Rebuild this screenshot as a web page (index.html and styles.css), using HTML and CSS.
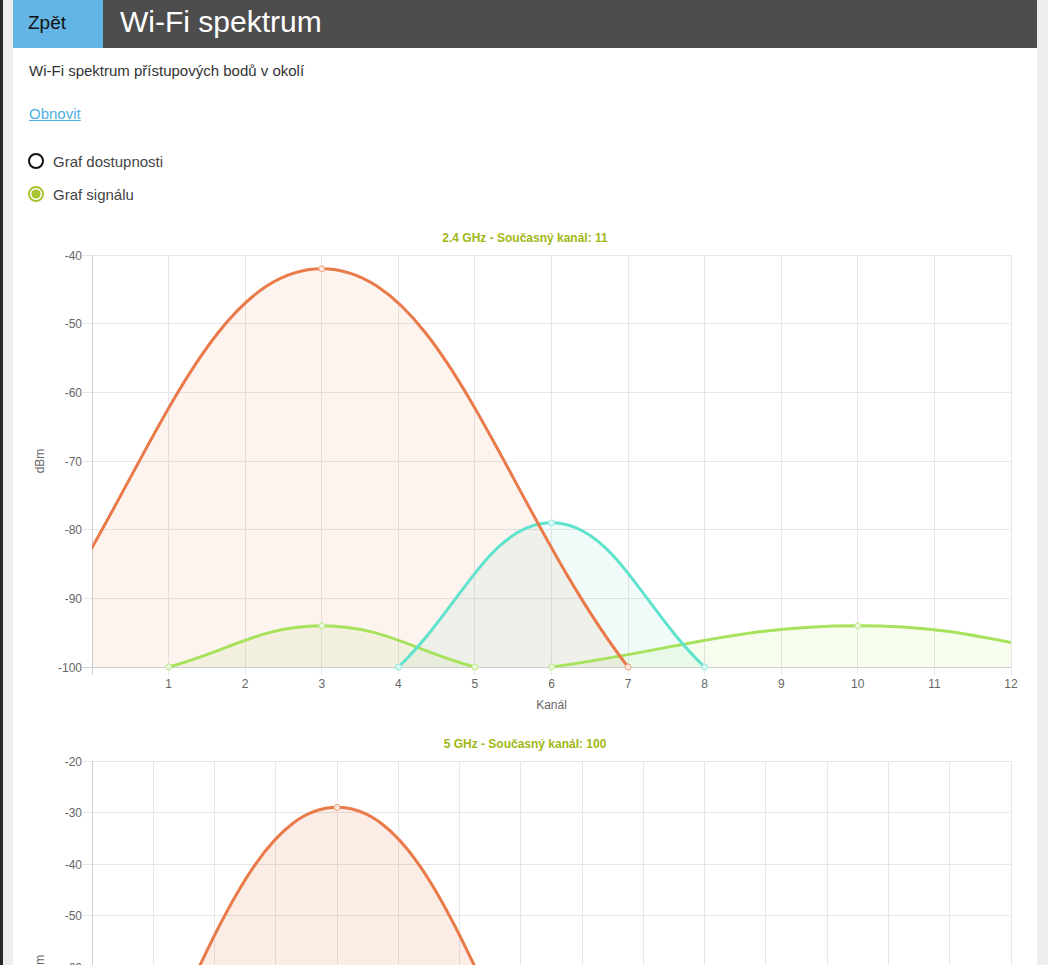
FILE: index.html
```html
<!DOCTYPE html>
<html lang="cs">
<head>
<meta charset="utf-8">
<title>Wi-Fi spektrum</title>
<link rel="stylesheet" href="styles.css">
</head>
<body>
<div class="frame">
  <div class="page">
    <header class="topbar">
      <a class="back" href="#">Zpět</a>
      <h1 class="title">Wi-Fi spektrum</h1>
    </header>
    <main class="content">
      <p class="desc">Wi-Fi spektrum přístupových bodů v okolí</p>
      <a class="refresh" href="#">Obnovit</a>
      <div class="radios">
        <label class="radio"><span class="dot"></span>Graf dostupnosti</label>
        <label class="radio checked"><span class="dot"></span>Graf signálu</label>
      </div>
    </main>
    <section class="charts">
      <svg class="chart chart1" viewBox="13 228 1024 490" width="1024" height="490" xmlns="http://www.w3.org/2000/svg">
        <defs>
          <clipPath id="area1"><rect x="92" y="250" width="919" height="417.5"/></clipPath>
        </defs>
        <text class="ctitle" x="525" y="242">2.4 GHz - Současný kanál: 11</text>
        <g class="grid">
          <line x1="83" y1="255.5" x2="1011" y2="255.5"/>
          <line x1="83" y1="323.5" x2="1011" y2="323.5"/>
          <line x1="83" y1="392.5" x2="1011" y2="392.5"/>
          <line x1="83" y1="461.5" x2="1011" y2="461.5"/>
          <line x1="83" y1="529.5" x2="1011" y2="529.5"/>
          <line x1="83" y1="598.5" x2="1011" y2="598.5"/>
          <line x1="168.5" y1="255" x2="168.5" y2="675"/>
          <line x1="245.5" y1="255" x2="245.5" y2="675"/>
          <line x1="321.5" y1="255" x2="321.5" y2="675"/>
          <line x1="398.5" y1="255" x2="398.5" y2="675"/>
          <line x1="474.5" y1="255" x2="474.5" y2="675"/>
          <line x1="551.5" y1="255" x2="551.5" y2="675"/>
          <line x1="628.5" y1="255" x2="628.5" y2="675"/>
          <line x1="704.5" y1="255" x2="704.5" y2="675"/>
          <line x1="781.5" y1="255" x2="781.5" y2="675"/>
          <line x1="857.5" y1="255" x2="857.5" y2="675"/>
          <line x1="934.5" y1="255" x2="934.5" y2="675"/>
          <line x1="1011.5" y1="255" x2="1011.5" y2="675"/>
        </g>
        <g class="axis">
          <line x1="92.5" y1="255" x2="92.5" y2="675"/>
          <line x1="83" y1="667.5" x2="1011" y2="667.5"/>
        </g>
        <g class="ylabels">
          <text x="82" y="259.5">-40</text>
          <text x="82" y="328">-50</text>
          <text x="82" y="396.5">-60</text>
          <text x="82" y="465.5">-70</text>
          <text x="82" y="534">-80</text>
          <text x="82" y="602.5">-90</text>
          <text x="82" y="671.5">-100</text>
        </g>
        <g class="xlabels">
          <text x="168.6" y="688">1</text>
          <text x="245.2" y="688">2</text>
          <text x="321.8" y="688">3</text>
          <text x="398.3" y="688">4</text>
          <text x="474.9" y="688">5</text>
          <text x="551.5" y="688">6</text>
          <text x="628.1" y="688">7</text>
          <text x="704.7" y="688">8</text>
          <text x="781.3" y="688">9</text>
          <text x="857.8" y="688">10</text>
          <text x="934.4" y="688">11</text>
          <text x="1011" y="688">12</text>
        </g>
        <text class="axtitle" x="551.5" y="709">Kanál</text>
        <text class="axtitle" x="40" y="465" transform="rotate(-90 40 461)">dBm</text>
        <g clip-path="url(#area1)">
          <path class="fill green" d="M168.58,667 C229.85,650.52 260.48,625.8 321.75,625.8 C383.02,625.8 413.65,650.52 474.92,667 Z"/>
          <path class="fill green" d="M551.5,667 C674.03,650.52 735.3,625.8 857.83,625.8 C980.36,625.8 1011,650.52 1164.17,667 Z"/>
          <path class="fill teal" d="M398.33,667 C459.6,609.32 490.23,522.8 551.5,522.8 C612.77,522.8 643.4,609.32 704.67,667 Z"/>
          <path class="fill orange" d="M15.42,667 C137.95,507.69 199.22,268.73 321.75,268.73 C444.28,268.73 505.55,507.69 628.08,667 Z"/>
          <path class="line green" d="M168.58,667 C229.85,650.52 260.48,625.8 321.75,625.8 C383.02,625.8 413.65,650.52 474.92,667"/>
          <path class="line green" d="M551.5,667 C674.03,650.52 735.3,625.8 857.83,625.8 C980.36,625.8 1011,650.52 1164.17,667"/>
          <path class="line teal" d="M398.33,667 C459.6,609.32 490.23,522.8 551.5,522.8 C612.77,522.8 643.4,609.32 704.67,667"/>
          <path class="line orange" d="M15.42,667 C137.95,507.69 199.22,268.73 321.75,268.73 C444.28,268.73 505.55,507.69 628.08,667"/>
        </g>
        <g class="pts">
          <circle class="pt green" cx="168.58" cy="667" r="3"/>
          <circle class="pt green" cx="321.75" cy="625.8" r="3"/>
          <circle class="pt green" cx="474.92" cy="667" r="3"/>
          <circle class="pt green" cx="551.5" cy="667" r="3"/>
          <circle class="pt green" cx="857.83" cy="625.8" r="3"/>
          <circle class="pt teal" cx="398.33" cy="667" r="3"/>
          <circle class="pt teal" cx="551.5" cy="522.8" r="3"/>
          <circle class="pt teal" cx="704.67" cy="667" r="3"/>
          <circle class="pt orange" cx="321.75" cy="268.73" r="3"/>
          <circle class="pt orange" cx="628.08" cy="667" r="3"/>
        </g>
      </svg>
      <svg class="chart chart2" viewBox="13 728 1024 460" width="1024" height="460" xmlns="http://www.w3.org/2000/svg">
        <defs>
          <clipPath id="area2"><rect x="92" y="756" width="919" height="417.5"/></clipPath>
        </defs>
        <text class="ctitle" x="525" y="748">5 GHz - Současný kanál: 100</text>
        <g class="grid">
          <line x1="83" y1="761.5" x2="1011" y2="761.5"/>
          <line x1="83" y1="812.5" x2="1011" y2="812.5"/>
          <line x1="83" y1="864.5" x2="1011" y2="864.5"/>
          <line x1="83" y1="915.5" x2="1011" y2="915.5"/>
          <line x1="83" y1="967.5" x2="1011" y2="967.5"/>
          <line x1="83" y1="1018.5" x2="1011" y2="1018.5"/>
          <line x1="83" y1="1070.5" x2="1011" y2="1070.5"/>
          <line x1="83" y1="1121.5" x2="1011" y2="1121.5"/>
          <line x1="153.5" y1="761" x2="153.5" y2="1181"/>
          <line x1="214.5" y1="761" x2="214.5" y2="1181"/>
          <line x1="275.5" y1="761" x2="275.5" y2="1181"/>
          <line x1="337.5" y1="761" x2="337.5" y2="1181"/>
          <line x1="398.5" y1="761" x2="398.5" y2="1181"/>
          <line x1="459.5" y1="761" x2="459.5" y2="1181"/>
          <line x1="520.5" y1="761" x2="520.5" y2="1181"/>
          <line x1="582.5" y1="761" x2="582.5" y2="1181"/>
          <line x1="643.5" y1="761" x2="643.5" y2="1181"/>
          <line x1="704.5" y1="761" x2="704.5" y2="1181"/>
          <line x1="765.5" y1="761" x2="765.5" y2="1181"/>
          <line x1="827.5" y1="761" x2="827.5" y2="1181"/>
          <line x1="888.5" y1="761" x2="888.5" y2="1181"/>
          <line x1="949.5" y1="761" x2="949.5" y2="1181"/>
          <line x1="1011.5" y1="761" x2="1011.5" y2="1181"/>
        </g>
        <g class="axis">
          <line x1="92.5" y1="761" x2="92.5" y2="1181"/>
          <line x1="83" y1="1173.5" x2="1011" y2="1173.5"/>
        </g>
        <g class="ylabels">
          <text x="82" y="765.5">-20</text>
          <text x="82" y="817">-30</text>
          <text x="82" y="868.5">-40</text>
          <text x="82" y="920">-50</text>
          <text x="82" y="971.5">-60</text>
          <text x="82" y="1023">-70</text>
          <text x="82" y="1074.5">-80</text>
          <text x="82" y="1126">-90</text>
          <text x="82" y="1177.5">-100</text>
        </g>
        <text class="axtitle" x="40" y="971" transform="rotate(-90 40 967)">dBm</text>
        <g clip-path="url(#area2)">
          <path class="fill orange2" d="M92,1173 C190.03,1026.74 239.04,807.35 337.07,807.35 C435.1,807.35 484.1,1026.74 582.13,1173 Z"/>
          <path class="line orange" d="M92,1173 C190.03,1026.74 239.04,807.35 337.07,807.35 C435.1,807.35 484.1,1026.74 582.13,1173"/>
        </g>
        <circle class="pt orange" cx="337.07" cy="807.35" r="3"/>
      </svg>
    </section>
  </div>
</div>
</body>
</html>
```

FILE: styles.css
```css
html, body {
  margin: 0;
  padding: 0;
  height: 100%;
  overflow: hidden;
}

body {
  background: #eeeeee;
  font-family: "Liberation Sans", Arial, sans-serif;
}

.frame {
  border-left: 3px solid #2a2a2a;
  padding: 0 11px 0 10px;
  min-height: 965px;
  box-sizing: border-box;
}

.page {
  background: #ffffff;
  min-height: 965px;
}

.topbar {
  display: flex;
  height: 48px;
  background: #4d4d4d;
}

.back {
  display: flex;
  align-items: center;
  width: 90px;
  box-sizing: border-box;
  padding: 0 0 3px 15px;
  background: #63b5e5;
  color: #111111;
  font-size: 19px;
  text-decoration: none;
}

.title {
  display: flex;
  align-items: center;
  margin: 0;
  padding: 0 0 5px 17px;
  color: #ffffff;
  font-size: 30px;
  font-weight: normal;
}

.content {
  padding: 13px 16px 0;
}

.desc {
  margin: 0;
  font-size: 15px;
  line-height: 20px;
  color: #333333;
}

.refresh {
  display: block;
  width: fit-content;
  margin-top: 23px;
  font-size: 15px;
  line-height: 20px;
  color: #4eaee3;
}

.radios {
  display: flex;
  flex-direction: column;
  gap: 9px;
  margin-top: 25px;
}

.radio {
  display: flex;
  align-items: center;
  gap: 9px;
  height: 24px;
  font-size: 15px;
  color: #444444;
}

.dot {
  width: 16px;
  height: 16px;
  margin-left: -1px;
  box-sizing: border-box;
  border: 2px solid #111111;
  border-radius: 50%;
  background: #ffffff;
}

.checked .dot {
  border-color: #a9c530;
  background: radial-gradient(circle, #a9c530 0 4.3px, #ffffff 4.8px);
}

.charts {
  margin-top: 22px;
}

.chart {
  display: block;
  font-family: "Liberation Sans", Arial, sans-serif;
}

.chart2 {
  margin-top: 10px;
}

.ctitle {
  font-size: 12px;
  font-weight: bold;
  fill: #a1b716;
  text-anchor: middle;
}

.grid line {
  stroke: #e6e6e6;
  stroke-width: 1;
  shape-rendering: crispEdges;
}

.axis line {
  stroke: #cfcfcf;
  stroke-width: 1;
  shape-rendering: crispEdges;
}

.ylabels text {
  font-size: 12px;
  fill: #666666;
  text-anchor: end;
}

.xlabels text {
  font-size: 12px;
  fill: #666666;
  text-anchor: middle;
}

.axtitle {
  font-size: 12px;
  fill: #666666;
  text-anchor: middle;
}

.fill.orange { fill: rgba(233, 123, 75, 0.09); }
.fill.orange2 { fill: rgba(233, 123, 75, 0.14); }
.fill.teal { fill: rgba(96, 227, 205, 0.09); }
.fill.green { fill: rgba(165, 226, 90, 0.1); }

.line {
  fill: none;
  stroke-width: 3;
  stroke-linejoin: round;
}

.line.orange { stroke: #e97b4b; }
.line.teal { stroke: #60e3cd; }
.line.green { stroke: #a6e25b; }

.pt {
  stroke-width: 1;
}

.pt.orange { fill: #fbe7de; stroke: #eea285; }
.pt.teal { fill: #dcf8f3; stroke: #8fead9; }
.pt.green { fill: #eaf7da; stroke: #bfe98f; }
```
